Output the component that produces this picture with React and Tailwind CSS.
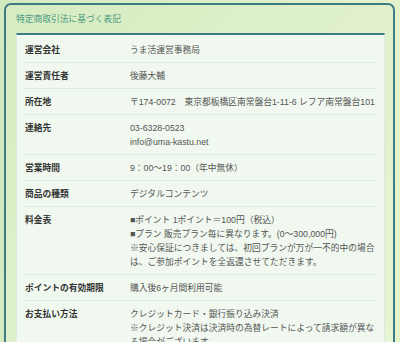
import React from "react";

/* -------- 表記データ -------- */
const rows = [
  { label: "運営会社", lines: ["うま活運営事務局"] },
  { label: "運営責任者", lines: ["後藤大輔"] },
  {
    label: "所在地",
    lines: ["〒174-0072　東京都板橋区南常盤台1-11-6 レフア南常盤台101"],
  },
  { label: "連絡先", lines: ["03-6328-0523", "info@uma-kastu.net"] },
  { label: "営業時間", lines: ["9：00～19：00（年中無休）"] },
  { label: "商品の種類", lines: ["デジタルコンテンツ"] },
  {
    label: "料金表",
    lines: [
      "■ポイント 1ポイント＝100円（税込）",
      "■プラン 販売プラン毎に異なります。(0～300,000円)",
      "※安心保証につきましては、初回プランが万が一不的中の場合",
      "は、ご参加ポイントを全返還させてただきます。",
    ],
  },
  { label: "ポイントの有効期限", lines: ["購入後6ヶ月間利用可能"] },
  {
    label: "お支払い方法",
    lines: [
      "クレジットカード・銀行振り込み決済",
      "※クレジット決済は決済時の為替レートによって請求額が異な",
      "る場合がございます。",
    ],
  },
];

export default function App() {
  return (
    <div
      className="h-[342px] w-[400px] overflow-hidden bg-gradient-to-r from-[#d3eabf] via-[#dcefc6] to-[#e4f3cc] pt-[3px] pl-[4px] pr-[5px] text-[8.75px] leading-[14px]"
      style={{ fontFamily: '"Liberation Sans", "Noto Sans CJK JP", sans-serif' }}
    >
      <div className="h-[400px] rounded-t-[7px] border-2 border-[#3d7c86] bg-gradient-to-br from-[#d6ecc2] via-[#e0f1cb] to-[#e9f5d4] px-[10px] pr-[8px]">
        {/* -------- Title -------- */}
        <div className="flex h-[28px] items-center text-[#4b9a80]">
          特定商取引法に基づく表記
        </div>

        {/* -------- Table -------- */}
        <div className="border-x border-t-2 border-x-[#d9ece0] border-t-[#3d7c86] bg-[#f0f8ef] px-[7px] pt-[2px]">
          {rows.map((r) => (
            <div
              key={r.label}
              className="flex border-b border-[#dcebe1] pt-[6px] pb-[5px]"
            >
              <div className="w-[106px] shrink-0 pl-[1px] font-bold text-[#333333]">
                {r.label}
              </div>
              <div className="text-[#555555]">
                {r.lines.map((l) => (
                  <div key={l} className="whitespace-nowrap">
                    {l}
                  </div>
                ))}
              </div>
            </div>
          ))}
        </div>
      </div>
    </div>
  );
}
